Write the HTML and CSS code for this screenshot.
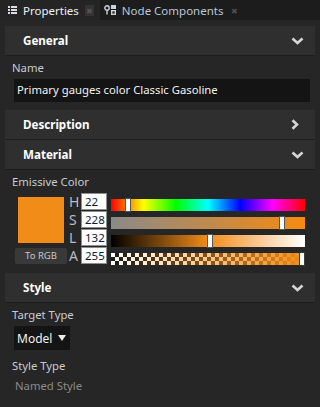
FILE: index.html
```html
<!DOCTYPE html>
<html>
  <head>
    <title>Properties</title>
    <link rel="stylesheet" href="styles.css">
  </head>
  <body>
    <div class="tabs">
      <div class="tab active">
        <svg class="tab-icon" width="9" height="8" viewBox="0 0 9 8">
          <rect x="0" y="0" width="2" height="2" fill="#d8dde4"/>
          <rect x="3" y="0" width="6" height="2" fill="#d8dde4"/>
          <rect x="0" y="3" width="2" height="2" fill="#d8dde4"/>
          <rect x="3" y="3" width="6" height="2" fill="#d8dde4"/>
          <rect x="0" y="6" width="2" height="2" fill="#d8dde4"/>
          <rect x="3" y="6" width="6" height="2" fill="#d8dde4"/>
        </svg>
        <span class="tab-title">Properties</span>
        <span class="tab-close">&#x2716;</span>
      </div>
      <div class="tab">
        <svg class="tab-icon" width="13" height="10" viewBox="0 0 13 10">
          <circle cx="3" cy="3" r="2.2" fill="none" stroke="#c9d2dd" stroke-width="1.4"/>
          <rect x="2.3" y="5.5" width="1.4" height="4" fill="#c9d2dd"/>
          <rect x="7" y="0" width="5" height="4" fill="#c9d2dd"/>
          <rect x="7.7" y="5.7" width="3.6" height="3.6" fill="none" stroke="#c9d2dd" stroke-width="1.4"/>
        </svg>
        <span class="tab-title">Node Components</span>
        <span class="tab-close">&#x2716;</span>
      </div>
    </div>

    <div class="panel">
      <div class="section-header">
        <span>General</span>
        <svg class="chevron" width="13" height="8" viewBox="0 0 13 8"><polyline points="1.5,1.5 6.5,6 11.5,1.5"/></svg>
      </div>
      <div class="field">
        <div class="label">Name</div>
        <div class="text-input">Primary gauges color Classic Gasoline</div>
      </div>

      <div class="section-header">
        <span>Description</span>
        <svg class="chevron right" width="8" height="11" viewBox="0 0 8 11"><polyline points="1.5,1.2 6,5.5 1.5,9.8"/></svg>
      </div>
      <div class="section-header">
        <span>Material</span>
        <svg class="chevron" width="13" height="8" viewBox="0 0 13 8"><polyline points="1.5,1.5 6.5,6 11.5,1.5"/></svg>
      </div>
      <div class="field">
        <div class="label">Emissive Color</div>
        <div class="color-editor">
          <div class="swatch"></div>
          <div class="channel">H</div>
          <div class="num">22</div>
          <div class="bar hue"><div class="handle" style="left: 14px"></div></div>
          <div class="channel">S</div>
          <div class="num">228</div>
          <div class="bar sat"><div class="handle" style="left: 168px"></div></div>
          <div class="channel">L</div>
          <div class="num">132</div>
          <div class="bar light"><div class="handle" style="left: 96px"></div></div>
          <div class="to-rgb">To RGB</div>
          <div class="channel">A</div>
          <div class="num">255</div>
          <div class="bar alpha"><div class="handle dark" style="left: 188px"></div></div>
        </div>
      </div>

      <div class="section-header">
        <span>Style</span>
        <svg class="chevron" width="13" height="8" viewBox="0 0 13 8"><polyline points="1.5,1.5 6.5,6 11.5,1.5"/></svg>
      </div>
      <div class="field tight">
        <div class="label">Target Type</div>
        <div class="dropdown">Model <span class="arrow"></span></div>
      </div>
      <div class="field">
        <div class="label">Style Type</div>
        <div class="value">Named Style</div>
      </div>
    </div>
  </body>
</html>
```

FILE: styles.css
```css
body {
  margin: 0;
  width: 320px;
  height: 407px;
  background-color: #262626;
  font-family: "Noto Sans", sans-serif;
  font-size: 11.3px;
  color: #c6ccd3;
  overflow: hidden;
}
.tabs {
  display: flex;
  height: 20px;
  background-color: #1c1c1c;
}
.tab {
  display: flex;
  align-items: center;
  padding: 0 6px 0 4px;
  color: #b9c6d6;
  font-size: 11.5px;
}
.tab.active {
  background-color: #242424;
  color: #eef2f7;
  padding-left: 8px;
}
.tab-icon {
  margin-right: 5px;
}
.tab.active .tab-icon {
  margin-right: 6px;
}
.tab-close {
  margin-left: 8px;
  font-size: 8px;
  color: #4e4e4e;
}
.tab.active .tab-close {
  margin-left: 6px;
  color: #555;
  background-color: #333;
  padding: 0 1px;
}
.panel {
  padding: 6px 5px;
}
.section-header {
  display: flex;
  align-items: center;
  justify-content: space-between;
  height: 29px;
  padding: 0 11px 0 18px;
  background-color: #2f2f2f;
  border-bottom: 1px solid #1d1d1d;
  color: #ffffff;
  font-weight: bold;
  font-size: 11.6px;
}
.chevron {
  fill: none;
  stroke: #d6d6d6;
  stroke-width: 2.6;
}
.chevron.right {
  margin-right: 5px;
}
.field {
  padding: 3px 5px 8px 7px;
}
.field.tight {
  padding-bottom: 4px;
}
.label {
  line-height: 17px;
}
.text-input {
  margin: 3px 0 0 2px;
  height: 23px;
  line-height: 22px;
  padding-left: 3px;
  background-color: #141414;
  color: #f2f2f2;
}
.color-editor {
  display: grid;
  grid-template-columns: 52px 14px 26px 1fr;
  grid-template-rows: repeat(4, 18px);
  margin: 3px 5px 0 3px;
}
.swatch {
  grid-row: 1 / 4;
  grid-column: 1;
  width: 46px;
  height: 46px;
  margin: 4px 0 0 3px;
  background-color: #f28c18;
}
.to-rgb {
  grid-row: 4;
  grid-column: 1;
  height: 16px;
  margin-top: 1px;
  border-radius: 2px;
  background-color: #393939;
  color: #c8c8c8;
  font-size: 9.5px;
  line-height: 16px;
  text-align: center;
}
.channel {
  grid-column: 2;
  font-size: 14px;
  line-height: 18px;
  color: #b7bcc2;
  padding-left: 2px;
}
.num {
  grid-column: 3;
  height: 15px;
  margin-bottom: 1px;
  border: 1px solid #8d8d8d;
  background-color: #ffffff;
  color: #0d1a33;
  font-size: 11.5px;
  line-height: 15px;
  padding-left: 3px;
}
.bar {
  grid-column: 4;
  position: relative;
  height: 12px;
  margin: 6px 0 0 4px;
}
.handle {
  position: absolute;
  top: -1px;
  width: 4px;
  height: 12px;
  background-color: #ffffff;
  border: 1px solid #555;
}
.handle.dark {
  border-color: #3a3a3a;
}
.hue {
  background: linear-gradient(to right, #ff0000, #ffff00, #00ff00, #00ffff, #0000ff, #ff00ff, #ff0000);
}
.sat {
  background: linear-gradient(to right, #8a8a8a, #f68a10);
}
.light {
  background: linear-gradient(to right, #000000, #f28c18, #ffffff);
}
.alpha {
  background:
    linear-gradient(to right, rgba(242, 140, 24, 0), #f28c18),
    repeating-conic-gradient(#1a1a1a 0 25%, #ffffff 0 50%) 0 0 / 8px 8px;
}
.dropdown {
  display: flex;
  align-items: center;
  width: fit-content;
  margin: 3px 0 0 2px;
  height: 24px;
  padding: 0 4px 0 3px;
  background-color: #141414;
  color: #f2f2f2;
  font-size: 12px;
}
.arrow {
  margin-left: 6px;
  width: 0;
  height: 0;
  border-left: 4.5px solid transparent;
  border-right: 4.5px solid transparent;
  border-top: 6px solid #eaeaea;
}
.value {
  margin: 4px 0 0 3px;
  color: #8b8b8b;
}
```
